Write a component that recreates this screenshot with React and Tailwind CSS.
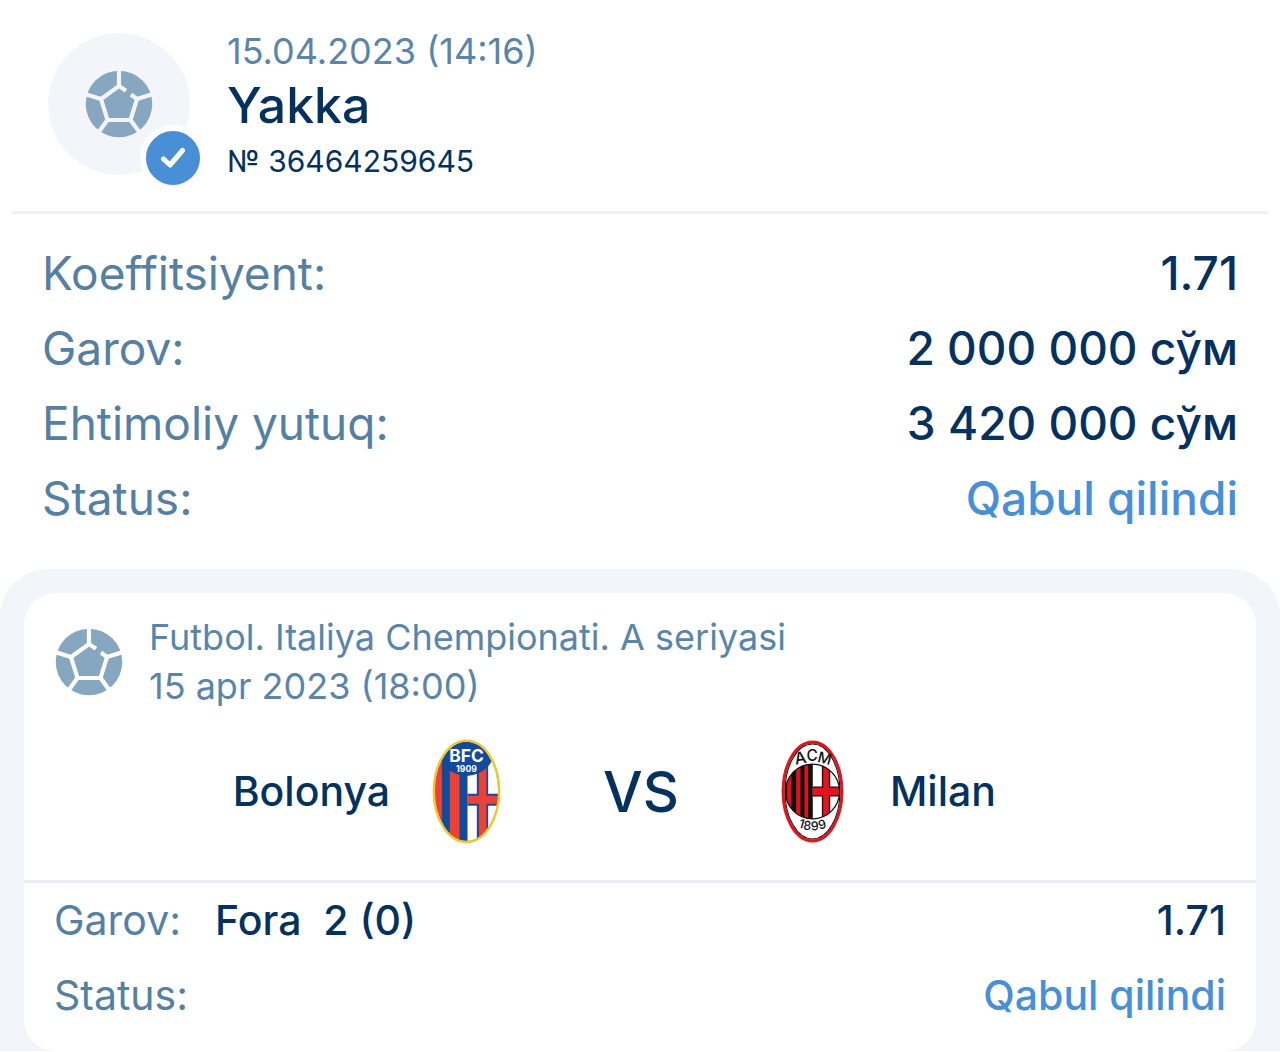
import React from 'react';
import clsx from 'clsx';

const summary = [
  { label: 'Koeffitsiyent:', value: '1.71' },
  { label: 'Garov:', value: '2 000 000 сўм' },
  { label: 'Ehtimoliy yutuq:', value: '3 420 000 сўм' },
  { label: 'Status:', value: 'Qabul qilindi', accepted: true },
];

const FootballIcon = ({ seamClass }) => (
  <svg viewBox="-34 -34 68 68" className="size-[68px] shrink-0" aria-hidden="true">
    <circle r="33.3" fill="#87a6bf" />
    <g className={seamClass} fill="none" strokeWidth="4.2">
      <path d="M7 -13.3 L0 -18 L-18 -5 L-11.5 16 H11.5 L18 -5 L12 -9.5" />
      <path d="M0 -18 V-35 M-18 -5 L-34 -10 M18 -5 L34 -10 M-11.5 16 L-21 29 M11.5 16 L21 29" />
    </g>
  </svg>
);

const BolognaCrest = () => (
  <svg viewBox="39 29 206 315" className="h-[105px] w-[69px] shrink-0" role="img" aria-label="Bologna FC">
    <defs>
      <clipPath id="bologna">
        <ellipse cx="142" cy="186" rx="95" ry="149" />
      </clipPath>
    </defs>
    <g clipPath="url(#bologna)">
      <rect x="40" y="30" width="205" height="315" fill="#124a9c" />
      <rect x="40" y="30" width="28" height="315" fill="#ea4335" />
      <rect x="92" y="30" width="29" height="315" fill="#ea4335" />
      <rect x="145" y="30" width="100" height="315" fill="#fff" />
      <path d="M173 30 H207 V193 H245 V229 H207 V345 H173 V229 H145 V193 H173 Z" fill="#124a9c" />
      <path d="M179 30 H202 V199 H245 V223 H202 V345 H179 V223 H145 V199 H179 Z" fill="#ea4335" />
      <ellipse cx="142" cy="56" rx="86" ry="84" fill="#124a9c" />
    </g>
    <ellipse cx="142" cy="186" rx="98" ry="152" fill="none" stroke="#f0c530" strokeWidth="7" />
    <g fill="#fff" fontWeight="700" textAnchor="middle">
      <text x="142" y="97" fontSize="52" fontFamily="Inter, sans-serif">BFC</text>
      <text x="142" y="128" fontSize="26" fontFamily="Inter, sans-serif">1909</text>
    </g>
  </svg>
);

const MilanCrest = () => (
  <svg viewBox="51 31 188 308" className="h-[103px] w-[63px] shrink-0" role="img" aria-label="AC Milan">
    <defs>
      <clipPath id="milan">
        <ellipse cx="145" cy="185" rx="81" ry="82" />
      </clipPath>
    </defs>
    <ellipse cx="145" cy="185" rx="88" ry="148" fill="#fff" stroke="#e3141e" strokeWidth="9" />
    <ellipse cx="145" cy="185" rx="82" ry="142" fill="none" stroke="#2a0a0a" strokeWidth="3" />
    <g clipPath="url(#milan)">
      <rect x="60" y="100" width="86" height="170" fill="#d9141e" />
      <rect x="60" y="100" width="9" height="170" fill="#111" />
      <rect x="82" y="100" width="14" height="170" fill="#111" />
      <rect x="109" y="100" width="12" height="170" fill="#111" />
      <rect x="132" y="100" width="14" height="170" fill="#111" />
      <rect x="146" y="100" width="84" height="170" fill="#fff" />
      <path d="M173 95 H198 V170 H235 V200 H198 V275 H173 V200 H146 V170 H173 Z" fill="#2a0a0a" />
      <path d="M177 95 H194 V174 H235 V196 H194 V275 H177 V196 H146 V174 H177 Z" fill="#e3141e" />
    </g>
    <ellipse cx="145" cy="185" rx="81" ry="82" fill="none" stroke="#111" strokeWidth="4" />
    <g fill="#111" fontFamily="Inter, sans-serif" textAnchor="middle">
      <text x="112" y="102" fontSize="50" transform="rotate(-10 112 102)">A</text>
      <text x="144" y="94" fontSize="46">C</text>
      <text x="178" y="101" fontSize="45" transform="rotate(14 178 101)">M</text>
      <g fontSize="37" fontWeight="500">
        <text x="109" y="294" transform="rotate(16 109 294)">1</text>
        <text x="128" y="300" transform="rotate(6 128 300)">8</text>
        <text x="153" y="301" transform="rotate(-5 153 301)">9</text>
        <text x="177" y="296" transform="rotate(-15 177 296)">9</text>
      </g>
    </g>
  </svg>
);

const BetHeader = () => (
  <header className="mx-3 flex border-b-3 border-[#f0f0f2] pt-[33px] pr-6 pb-[30px] pl-9">
    <div className="relative flex size-[142px] shrink-0 items-center justify-center rounded-full bg-[#f3f5fb]">
      <FootballIcon seamClass="stroke-[#f3f5fb]" />
      <span className="absolute -right-4 -bottom-4 flex size-[66px] items-center justify-center rounded-full border-6 border-white bg-[#488fd6]">
        <svg viewBox="0 0 26 22" className="h-[22px] w-[26px]" fill="none" stroke="#fff" strokeWidth="5" strokeLinecap="round" strokeLinejoin="round" aria-hidden="true">
          <path d="M3.5 12 L10 18 L22.5 3.5" />
        </svg>
      </span>
    </div>
    <div className="ml-[37px] min-w-0">
      <p className="text-[36px] leading-9 text-[#5b85a8]">15.04.2023 (14:16)</p>
      <h1 className="text-[50px] leading-[72px] font-medium">Yakka</h1>
      <p className="text-[30px] leading-10">№ 36464259645</p>
    </div>
  </header>
);

const App = () => {
  return (
    <main className="min-h-screen bg-white font-['Inter','Liberation_Sans',sans-serif] text-[#04315d]">
      <BetHeader />

      <dl className="px-[42px] pt-[22px] pb-[33px] text-[46px] leading-[75px]">
        {summary.map((row) => (
          <div key={row.label} className="flex justify-between">
            <dt className="text-[#5680a2]">{row.label}</dt>
            <dd className={clsx('font-medium', row.accepted && 'text-[#488fd6]')}>{row.value}</dd>
          </div>
        ))}
      </dl>

      {/* Event card */}
      <section className="rounded-t-[48px] bg-[#f3f5fb] px-6 pt-6">
        <article className="rounded-[32px] bg-white">
          <div className="flex items-center gap-[26px] px-[31px] pt-5">
            <FootballIcon seamClass="stroke-white" />
            <div className="text-[36px] leading-[49px] text-[#5b85a8]">
              <p>Futbol. Italiya Chempionati. A seriyasi</p>
              <p>15 apr 2023 (18:00)</p>
            </div>
          </div>

          <div className="grid grid-cols-[1fr_auto_1fr] items-center border-b-3 border-[#eaedf5] pt-7 pb-9 pl-0.5 text-[41px] font-medium">
            <div className="flex items-center justify-end gap-[42px]">
              <span>Bolonya</span>
              <BolognaCrest />
            </div>
            <span className="px-[102px] text-[56px]">VS</span>
            <div className="flex items-center gap-[46px]">
              <MilanCrest />
              <span>Milan</span>
            </div>
          </div>

          <dl className="px-[30px] pb-[18px] text-[41px] leading-[75px]">
            <div className="flex">
              <dt className="text-[#5680a2]">Garov:</dt>
              <dd className="ml-[34px] font-medium whitespace-pre">Fora  2 (0)</dd>
              <dd className="ml-auto font-medium">1.71</dd>
            </div>
            <div className="flex justify-between">
              <dt className="text-[#5680a2]">Status:</dt>
              <dd className="font-medium text-[#488fd6]">Qabul qilindi</dd>
            </div>
          </dl>
        </article>
      </section>
    </main>
  );
};

export default App;
